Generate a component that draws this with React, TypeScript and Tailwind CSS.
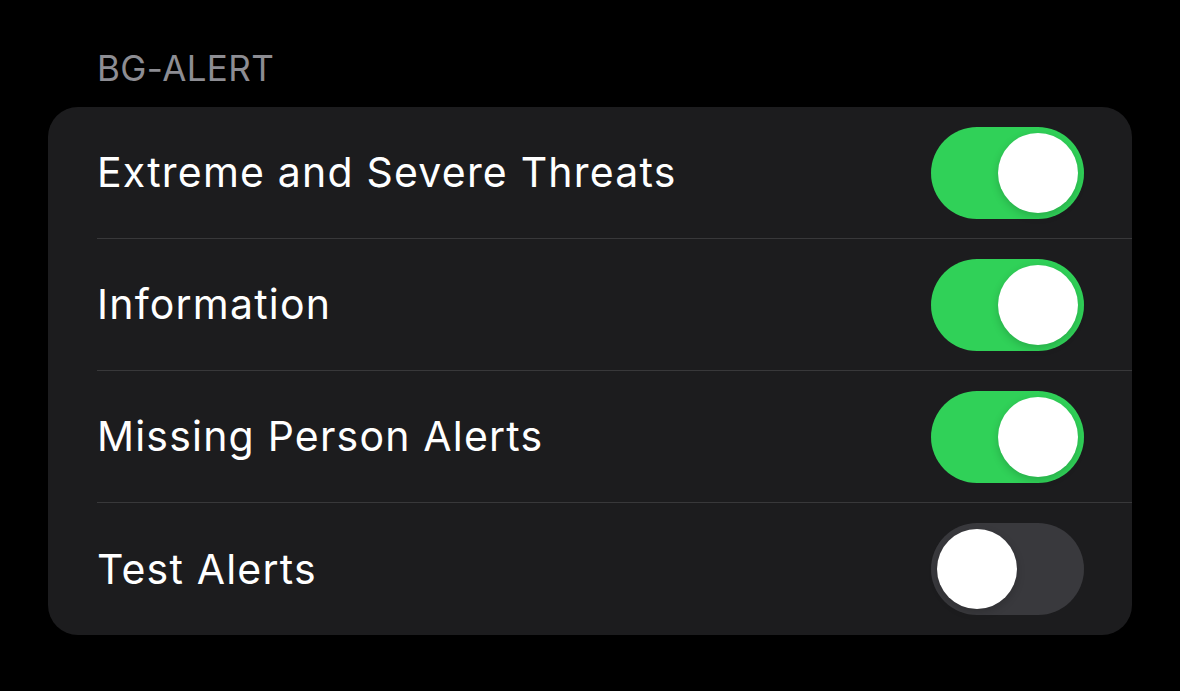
import React from "react";

const rows = [
  { label: "Extreme and Severe Threats", on: true },
  { label: "Information", on: true },
  { label: "Missing Person Alerts", on: true },
  { label: "Test Alerts", on: false },
];

function Toggle({ on }: { on: boolean }) {
  return (
    <div
      className={`flex h-[92px] w-[153px] shrink-0 items-center rounded-full px-[6px] ${
        on ? "justify-end bg-[#30d158]" : "justify-start bg-[#39393d]"
      }`}
    >
      <div className="h-[80px] w-[80px] rounded-full bg-white shadow-[0_3px_8px_rgba(0,0,0,0.18)]" />
    </div>
  );
}

export default function App() {
  return (
    <div
      className="min-h-[691px] w-full bg-black pt-[46px] pl-[48px] pr-[48px]"
      style={{ fontFamily: "Inter, 'Noto Sans', sans-serif" }}
    >
      <div className="pl-[49px] text-[35px] leading-[44px] tracking-[0.4px] text-[#8d8d93]">
        BG-ALERT
      </div>
      <div className="mt-[17px] overflow-hidden rounded-[30px] bg-[#1c1c1e]">
        {rows.map((r, i) => (
          <div key={r.label} className="pl-[49px]">
            <div
              className={`flex items-center justify-between pr-[48px] ${
                i === 0
                  ? "h-[131px]"
                  : i === rows.length - 1
                  ? "h-[133px] border-t border-[#38383a]"
                  : "h-[132px] border-t border-[#38383a]"
              }`}
            >
              <span className="text-[41px] leading-none tracking-[1.2px] text-white">
                {r.label}
              </span>
              <Toggle on={r.on} />
            </div>
          </div>
        ))}
      </div>
    </div>
  );
}
